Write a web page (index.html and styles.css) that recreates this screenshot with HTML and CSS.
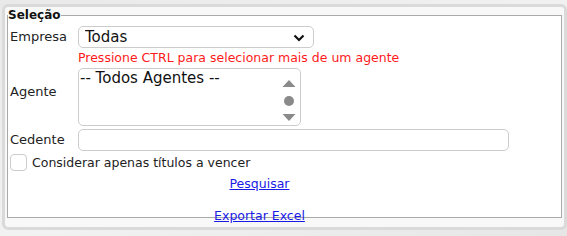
FILE: index.html
```html
<!DOCTYPE html>
<html lang="pt-BR">
<head>
    <meta charset="UTF-8">
    <title>Seleção</title>
    <link rel="stylesheet" href="styles.css">
</head>
<body>
    <div class="painel">
        <fieldset class="selecao">
            <legend>Seleção</legend>
            <table class="filtros">
                <tr>
                    <td class="lbl">Empresa</td>
                    <td>
                        <span class="combo">
                            <select id="empresa">
                                <option>Todas</option>
                            </select>
                            <svg class="seta" width="12" height="8" viewBox="0 0 12 8"><path d="M1.5 1.5 L6 6 L10.5 1.5" fill="none" stroke="#111" stroke-width="2.2"/></svg>
                        </span>
                    </td>
                </tr>
                <tr>
                    <td></td>
                    <td class="aviso">Pressione CTRL para selecionar mais de um agente</td>
                </tr>
                <tr>
                    <td class="lbl agente">Agente</td>
                    <td>
                        <div class="lista">
                            <div class="opcoes">-- Todos Agentes --</div>
                            <svg class="rolagem" width="16" height="50" viewBox="0 0 16 50">
                                <path d="M1.5 15 L8 8 L14.5 15 Z" fill="#8a8a8a"/>
                                <circle cx="8" cy="29" r="5" fill="#8a8a8a"/>
                                <path d="M1.5 42 L8 49 L14.5 42 Z" fill="#8a8a8a"/>
                            </svg>
                        </div>
                    </td>
                </tr>
                <tr>
                    <td class="lbl">Cedente</td>
                    <td><input type="text" id="cedente" class="campo"></td>
                </tr>
                <tr>
                    <td colspan="2" class="check">
                        <input type="checkbox" id="avencer"><label for="avencer">Considerar apenas títulos a vencer</label>
                    </td>
                </tr>
                <tr>
                    <td colspan="2" class="acao"><a href="#">Pesquisar</a></td>
                </tr>
                <tr>
                    <td colspan="2" class="acao exportar"><a href="#">Exportar Excel</a></td>
                </tr>
            </table>
        </fieldset>
    </div>
</body>
</html>
```

FILE: styles.css
```css
body {
    margin: 0;
    font-family: 'DejaVu Sans', sans-serif;
    font-size: 12.5px;
    color: #222;
    background: linear-gradient(160deg, #e9e9e9 0%, #f2f2f2 55%, #e6e6e6 100%);
    height: 236px;
}

/* Painel externo */
.painel {
    margin: 4px 4px 0 2px;
    width: 555px;
    height: 220px;
    border: 3px solid #dadada;
    border-radius: 6px;
    background-color: #f8f8f8;
    padding: 0 2px;
}

.selecao {
    margin: 0;
    padding: 0;
    height: 209px;
    border: 1px solid #aaa;
    background-color: white;
}

.selecao legend {
    padding: 0;
    font-size: 12px;
    font-weight: bold;
    line-height: 16px;
    color: #111;
}

.filtros {
    border-spacing: 0;
    margin-top: 2px;
}

.filtros td {
    padding: 1px 2px;
    line-height: 16px;
}

.lbl {
    width: 64px;
    font-size: 13px;
}

.agente {
    padding-bottom: 12px !important;
}

.combo {
    position: relative;
    display: inline-block;
}

.combo select {
    appearance: none;
    width: 236px;
    height: 22px;
    border: 1px solid #ccc;
    border-radius: 5px;
    background: white;
    font-family: inherit;
    font-size: 15px;
    padding: 0 0 0 6px;
    color: #111;
    display: block;
}

.seta {
    position: absolute;
    right: 9px;
    top: 8px;
}

.aviso {
    color: #ff1a1a;
}

.lista {
    display: flex;
    width: 221px;
    height: 56px;
    border: 1px solid #ccc;
    border-radius: 5px;
    font-size: 15px;
    color: #111;
    background: white;
}

.opcoes {
    flex: 1;
    padding-left: 1px;
    line-height: 18px;
}

.rolagem {
    margin: 3px 3px 0 0;
}

.campo {
    width: 431px;
    height: 22px;
    box-sizing: border-box;
    border: 1px solid #ccc;
    border-radius: 5px;
    margin: 1px 0 0 0;
    display: block;
}

.check {
    padding-top: 2px !important;
}

.check input {
    appearance: none;
    width: 17px;
    height: 17px;
    margin: 0 5px 0 0;
    border: 1px solid #ccc;
    border-radius: 4px;
    background: white;
    vertical-align: -4px;
}

.acao {
    text-align: center;
    padding-top: 4px !important;
}

.acao a {
    color: #1a1ae6;
}

.exportar {
    padding-top: 15px !important;
}
```
